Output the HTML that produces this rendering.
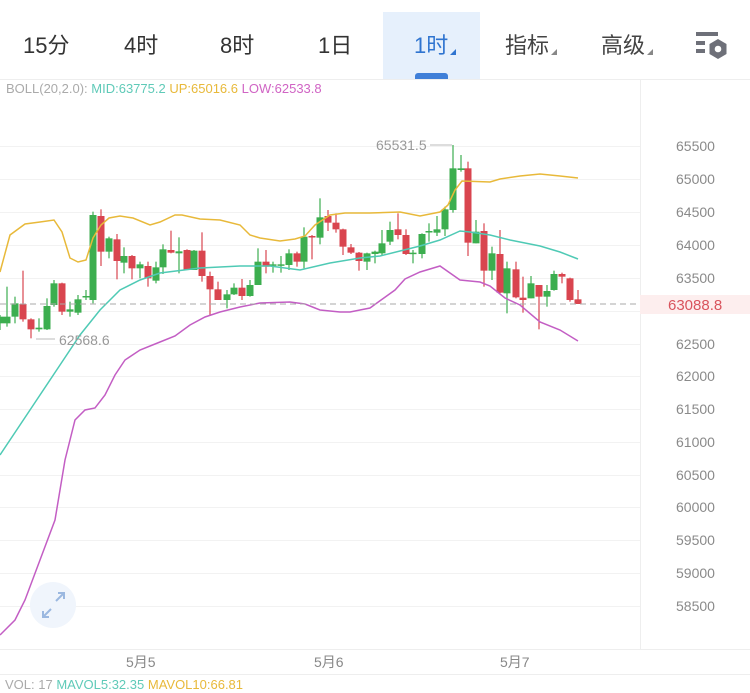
<!DOCTYPE html>
<html><head><meta charset="utf-8"><style>
body{margin:0;width:750px;height:693px;overflow:hidden;background:#fff;font-family:"Liberation Sans","Noto Sans CJK SC",sans-serif;position:relative}
.t{position:absolute;top:32px;font-size:22px;color:#333;line-height:28px}
.tri{display:inline-block;width:0;height:0;border-left:6px solid transparent;border-bottom:6px solid #888;margin-left:2px;vertical-align:-2px}
</style></head><body>
<div style="position:absolute;left:383px;top:12px;width:97px;height:67px;background:#e6f0fc"></div>
<div style="position:absolute;left:415px;top:73px;width:33px;height:6px;background:#3f7fd8;border-radius:3px 3px 0 0"></div>
<div class="t" style="left:23px">15分</div>
<div class="t" style="left:124px">4时</div>
<div class="t" style="left:220px">8时</div>
<div class="t" style="left:318px">1日</div>
<div class="t" style="left:414px;color:#2f74d0">1时<span class="tri" style="border-bottom-color:#2f74d0"></span></div>
<div class="t" style="left:505px;color:#444">指标<span class="tri"></span></div>
<div class="t" style="left:601px;color:#444">高级<span class="tri"></span></div>
<svg style="position:absolute;left:0;top:0" width="750" height="693">
<g fill="#6e7079"><rect x="696" y="32" width="22" height="4"/><rect x="696" y="41" width="9" height="4"/><rect x="696" y="49" width="9" height="4"/></g>
<polygon points="718,39 726.5,44 726.5,54 718,59 709.5,54 709.5,44" fill="#6e7079"/><circle cx="718" cy="49" r="3.3" fill="#fff"/>
<line x1="0" y1="79.5" x2="750" y2="79.5" stroke="#eee"/>
<line x1="640.5" y1="80" x2="640.5" y2="649" stroke="#eee"/>
<line x1="0" y1="649.5" x2="750" y2="649.5" stroke="#eee"/>
<line x1="0" y1="674.5" x2="750" y2="674.5" stroke="#eee"/>
<g id="grid" stroke="#f2f2f2"></g>
<g id="lbl" font-size="14" fill="#8a8a8a" font-family="Liberation Sans,sans-serif"></g>
<g id="c"></g>
<polyline fill="none" stroke="#e8b93a" stroke-width="1.5" points="0,272 10,235 25,224 40,222 54,220 62,232 70,258 78,262 86,260 93,238 101,225 109,218 120,216 133,218 150,225 160,222 175,215 182,215 200,219 220,220 240,225 250,235 260,238 280,241 295,239 305,236 315,225 330,215 345,213 370,213 400,212 420,216 440,212 448,205 455,190 462,181 490,182 500,179 520,176 540,174 560,176 578,178"/>
<polyline fill="none" stroke="#4fcab5" stroke-width="1.5" points="0,455 30,410 60,365 80,335 100,310 120,290 140,280 160,273 200,268 240,266 270,266 300,270 330,263 360,258 380,256 400,251 420,246 440,240 460,231 470,232 490,235 510,240 540,246 560,252 578,259"/>
<polyline fill="none" stroke="#c35ec4" stroke-width="1.5" points="0,635 15,620 25,600 40,560 55,520 65,460 75,420 85,410 95,408 105,395 115,375 125,360 140,350 160,342 175,336 190,325 205,317 220,312 240,307 260,303 290,302 305,304 320,310 340,312 350,312 370,308 395,290 405,279 420,272 440,266 460,280 480,282 490,286 505,298 520,305 540,322 560,330 578,341"/>
<line x1="0" y1="304" x2="640" y2="304" stroke="#aaa" stroke-dasharray="6,4"/>
<rect x="640" y="295" width="110" height="19" fill="#fdeeee"/>
<text x="668" y="310" font-size="15" fill="#d9545d">63088.8</text>
<line x1="36" y1="339" x2="55" y2="339" stroke="#bbb"/>
<text x="59" y="345" font-size="14" fill="#999">62568.6</text>
<text x="376" y="150" font-size="14" fill="#999">65531.5</text>
<line x1="430" y1="145" x2="452" y2="145" stroke="#bbb"/>
<circle cx="53" cy="605" r="23" fill="#f0f5fc"/>
<g stroke="#9bb8e0" stroke-width="2" fill="none"><path d="M56 601 L64 593 M58 593 H64 V599"/><path d="M51 609 L43 617 M43 611 V617 H49"/></g>
<g font-size="14" fill="#888"><text x="126" y="667">5月5</text><text x="314" y="667">5月6</text><text x="500" y="667">5月7</text></g>
</svg>
<div style="position:absolute;left:6px;top:81px;font-size:13px;color:#aaa">BOLL(20,2.0): <span style="color:#5fcab8">MID:63775.2</span> <span style="color:#e8b93a">UP:65016.6</span> <span style="color:#d064c4">LOW:62533.8</span></div>
<div style="position:absolute;left:5px;top:677px;font-size:13px;color:#aaa">VOL: 17 <span style="color:#5fcab8">MAVOL5:32.35</span> <span style="color:#e8b93a">MAVOL10:66.81</span></div>
<script>
var ns="http://www.w3.org/2000/svg";
function el(p,t,a){var e=document.createElementNS(ns,t);for(var k in a)e.setAttribute(k,a[k]);p.appendChild(e);return e}
var L=[[65500,146],[65000,179],[64500,212],[64000,245],[63500,278],[63000,311],[62500,344],[62000,376],[61500,409],[61000,442],[60500,475],[60000,507],[59500,540],[59000,573],[58500,606]];
var g=document.getElementById('grid'),lb=document.getElementById('lbl');
L.forEach(function(v){el(g,'line',{x1:0,x2:640,y1:v[1]+.5,y2:v[1]+.5});if(v[0]!=63000){var t=el(lb,'text',{x:676,y:v[1]+5});t.textContent=v[0];}});
// x, g/r, bodyTop, bodyBot, wickTop, wickBot (zoom coords *3 in zoom2 region offset y130)
var A=[[0,'g',560,580,555,600],[7,'g',560,580,470,590],[15,'g',520,560,500,580],[23,'r',522,568,422,575],[31,'r',568,598,565,625],[39,'g',593,598,565,605],[47,'g',528,598,505,600],[54,'g',460,525,450,530],[62,'r',460,545,458,555],[70,'g',538,545,515,560],[78,'g',508,548,495,555],[86,'g',498,502,480,510],[93,'g',255,510,245,520],[101,'r',258,365,238,408],[109,'g',325,365,320,385],[117,'r',328,393,312,448],[124,'g',378,398,352,430],[132,'r',378,415,375,448],[140,'g',403,415,395,445],[148,'r',408,445,395,470],[156,'g',412,452,395,460],[163,'g',358,412,343,432],[171,'r',360,368,302,370],[179,'g',364,370,322,430],[187,'r',360,420,358,418],[194,'g',362,420,360,420],[202,'r',362,438,307,455],[210,'r',438,478,425,558],[218,'r',478,510,455,510],[227,'g',493,510,480,535],[234,'g',473,493,460,495],[242,'r',473,498,447,510],[250,'g',465,498,450,500],[258,'g',395,465,355,465],[266,'r',395,410,360,430],[273,'g',403,407,395,428],[281,'g',403,407,378,428],[289,'g',370,405,358,420],[297,'r',370,395,365,410],[304,'g',320,395,292,415],[312,'r',318,322,315,388],[320,'g',262,323,205,343],[328,'r',258,278,240,303],[336,'r',278,298,250,308],[343,'r',298,350,296,375],[351,'r',352,368,342,372],[359,'r',368,393,366,422],[367,'g',370,395,368,420]];
var B=[[375,'g',365,372,362,400],[382,'g',340,370,300,375],[390,'g',300,335,275,345],[398,'r',298,315,250,328],[406,'r',315,372,298,375],[413,'g',368,372,360,400],[422,'g',312,372,310,385],[429,'g',303,307,280,335],[437,'g',298,308,258,318],[445,'g',238,298,230,318],[453,'g',115,240,45,248],[461,'g',115,120,75,125],[468,'r',115,338,95,378],[476,'g',305,340,270,340],[484,'r',303,422,280,470],[492,'g',370,422,350,450],[500,'r',372,488,300,490],[507,'g',415,490,395,550],[516,'r',418,502,395,505],[523,'r',503,510,440,548],[531,'g',460,505,438,505],[539,'r',465,500,465,598],[547,'g',483,500,465,530],[554,'g',432,480,422,482],[562,'r',432,440,428,460],[570,'r',445,510,443,515],[578,'r',508,522,480,522]];
var c=document.getElementById('c');
A.concat(B).forEach(function(d){var col=d[1]=='g'?'#3cae4f':'#d9454f';var f=function(z){return 130+z/3};
el(c,'line',{x1:d[0],x2:d[0],y1:f(d[4]),y2:f(d[5]),stroke:col,'stroke-width':1.2});
var t=f(d[2]),b=f(d[3]);el(c,'rect',{x:d[0]-3.5,y:t,width:7,height:Math.max(1.5,b-t),fill:col});});
</script>
</body></html>
